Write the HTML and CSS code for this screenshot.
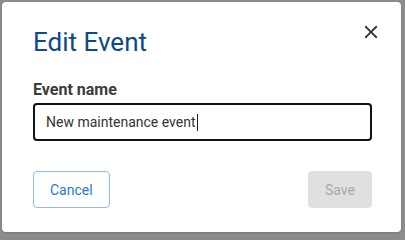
FILE: index.html
```html
<!DOCTYPE html>
<html lang="en">
<head>
<meta charset="utf-8">
<title>Edit Event</title>
<link rel="stylesheet" href="styles.css">
</head>
<body>
<div class="dialog" role="dialog" aria-labelledby="dlg-title">
  <button class="close" type="button" aria-label="Close">
    <svg viewBox="0 0 24 24" width="22" height="22" aria-hidden="true"><path d="M19 6.41L17.59 5 12 10.59 6.41 5 5 6.41 10.59 12 5 17.59 6.41 19 12 13.41 17.59 19 19 17.59 13.41 12z"/></svg>
  </button>
  <h2 class="title" id="dlg-title">Edit Event</h2>
  <label class="field">
    <span class="label">Event name</span>
    <span class="input"><span class="value">New maintenance event</span><span class="caret"></span></span>
  </label>
  <div class="actions">
    <button class="btn btn-outline" type="button">Cancel</button>
    <button class="btn btn-disabled" type="button" disabled>Save</button>
  </div>
</div>
</body>
</html>
```
FILE: styles.css
```css
html, body {
  margin: 0;
  padding: 0;
}
body {
  background: #8c8c8c;
  font-family: Roboto, "Liberation Sans", sans-serif;
  width: 405px;
  height: 236px;
  overflow: hidden;
}
.dialog {
  position: relative;
  box-sizing: border-box;
  margin: 2px;
  width: 399px;
  height: 230px;
  background: #fff;
  border-radius: 4px;
  box-shadow: 0 1px 2px rgba(0,0,0,0.15);
  padding: 24px 29px 24px 31px;
  display: flex;
  flex-direction: column;
}
.close {
  position: absolute;
  top: 14px;
  right: 14px;
  width: 32px;
  height: 32px;
  padding: 0;
  border: 0;
  background: transparent;
  display: flex;
  align-items: center;
  justify-content: center;
  cursor: pointer;
}
.close svg {
  fill: #333;
}
.title {
  margin: 0;
  font-size: 26px;
  line-height: 32px;
  font-weight: 400;
  color: #0b4a86;
}
.field {
  display: flex;
  flex-direction: column;
  gap: 3px;
  margin-top: 22px;
}
.label {
  font-size: 16px;
  line-height: 20px;
  font-weight: 700;
  color: #3c3c3c;
}
.input {
  box-sizing: border-box;
  height: 38px;
  border: 2px solid #111;
  border-radius: 4px;
  padding: 0 11px;
  display: flex;
  align-items: center;
  font-size: 14px;
  color: #333;
}
.caret {
  display: inline-block;
  width: 1px;
  height: 17px;
  background: #222;
  margin-left: 1px;
}
.actions {
  display: flex;
  justify-content: space-between;
  margin-top: 30px;
}
.btn {
  box-sizing: border-box;
  height: 37px;
  border-radius: 4px;
  font-family: Roboto, "Liberation Sans", sans-serif;
  font-size: 14px;
  padding: 0 16px;
}
.btn-outline {
  background: #fff;
  border: 1px solid #92bde8;
  color: #1f7ad2;
}
.btn-disabled {
  background: #e0e0e0;
  border: 1px solid #e0e0e0;
  color: #a8a8a8;
}
```
